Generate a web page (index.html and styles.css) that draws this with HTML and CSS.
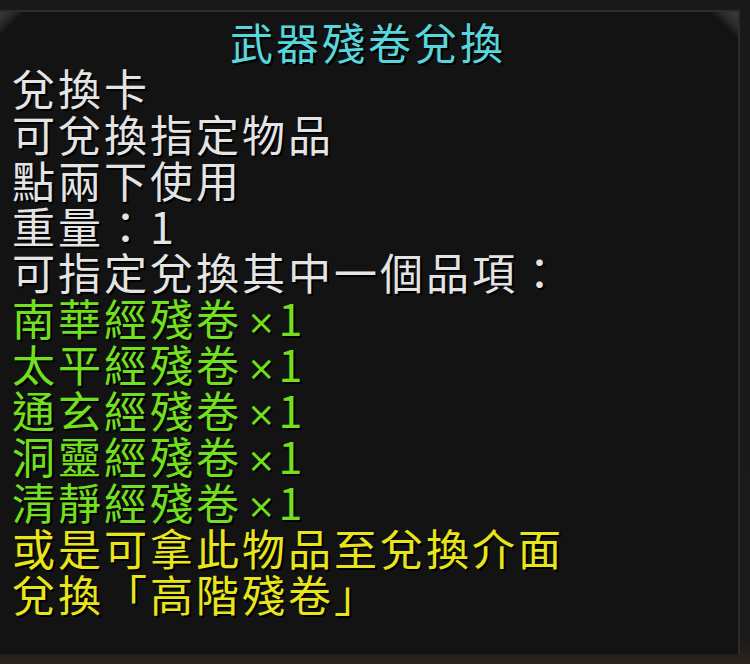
FILE: index.html
```html
<!DOCTYPE html>
<html lang="zh-Hant">
<head>
<meta charset="utf-8">
<title>武器殘卷兌換</title>
<link rel="stylesheet" href="styles.css">
</head>
<body>
<div class="frame">
  <div class="panel">
    <div class="line title">武器殘卷兌換</div>
    <div class="line white">兌換卡</div>
    <div class="line white">可兌換指定物品</div>
    <div class="line white">點兩下使用</div>
    <div class="line white">重量：1</div>
    <div class="line white">可指定兌換其中一個品項：</div>
    <div class="line green">南華經殘卷<span class="times">×</span>1</div>
    <div class="line green">太平經殘卷<span class="times">×</span>1</div>
    <div class="line green">通玄經殘卷<span class="times">×</span>1</div>
    <div class="line green">洞靈經殘卷<span class="times">×</span>1</div>
    <div class="line green">清靜經殘卷<span class="times">×</span>1</div>
    <div class="line yellow">或是可拿此物品至兌換介面</div>
    <div class="line yellow">兌換「高階殘卷」</div>
  </div>
</div>
</body>
</html>
```
FILE: styles.css
```css
html, body {
  margin: 0;
  padding: 0;
  background: #1b1916;
  width: 750px;
  height: 664px;
  overflow: hidden;
}
.frame {
  width: 750px;
  height: 664px;
  padding-top: 10px;
  box-sizing: border-box;
  background: linear-gradient(#1a1917, #1c1a18 96%, #2a241d);
}
.panel {
  position: relative;
  width: 740px;
  height: 645px;
  box-sizing: border-box;
  background: #131313;
  border-top: 2px solid #2d2d2d;
  border-right: 2px solid #2b2b2b;
  border-bottom: 1px solid #1e1c1a;
  padding: 6px 0 0 12px;
  font-family: "Noto Sans CJK TC", "Noto Sans CJK SC", sans-serif;
  font-size: 43px;
  letter-spacing: 3px;
  line-height: 46px;
  text-shadow: 2px 2px 0 #000;
}
.panel::before {
  content: "";
  position: absolute;
  left: 0;
  top: 0;
  width: 22px;
  height: 22px;
  background: linear-gradient(135deg, #3a3a3a 0%, #2a2a2a 30%, rgba(19,19,19,0) 55%);
}
.panel::after {
  content: "";
  position: absolute;
  right: 0;
  top: 0;
  width: 26px;
  height: 26px;
  background: linear-gradient(225deg, #3c3c3c 0%, #2c2c2c 30%, rgba(19,19,19,0) 55%);
}
.line {
  white-space: nowrap;
  height: 46px;
}
.title {
  color: #58d6de;
  text-align: center;
  padding-right: 14px;
}
.white { color: #e4e4e4; }
.green { color: #72e01e; }
.yellow { color: #e8e61a; }
.times {
  font-family: "DejaVu Sans", sans-serif;
  font-size: 34px;
  line-height: 0;
  letter-spacing: 3px;
  margin-left: 5px;
  vertical-align: 2px;
}
```
